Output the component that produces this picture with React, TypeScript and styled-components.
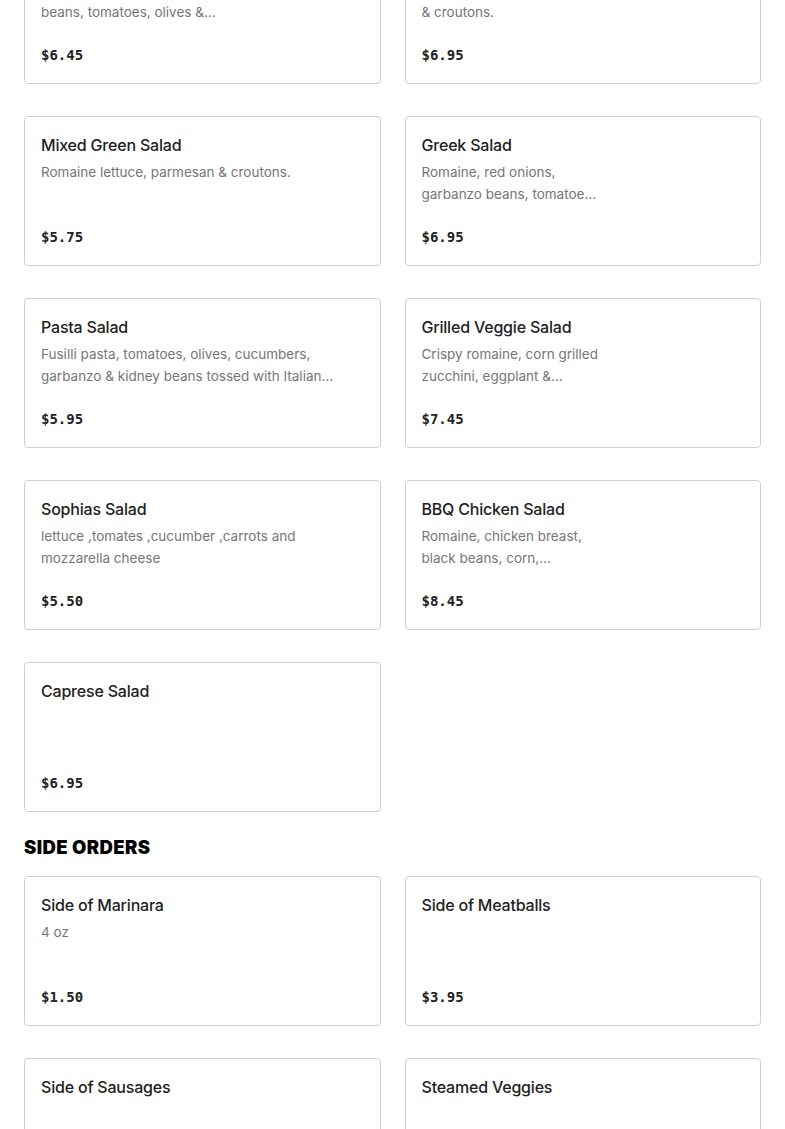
import styled, { createGlobalStyle } from 'styled-components';

const GlobalStyle = createGlobalStyle`
    html, body {
        margin: 0;
        padding: 0;
        background: #ffffff;
    }
    body {
        font-family: Inter, "Noto Sans", sans-serif;
        -webkit-font-smoothing: antialiased;
    }
`;

type Item = {
    name: string;
    description?: string;
    price: string;
};

const salads: Item[] = [
    { name: 'Antipasto Salad', description: 'Romaine, salami, provolone, onions, garbanzo beans, tomatoes, olives &...', price: '$6.45' },
    { name: 'Caesar Salad', description: 'Romaine, shaved parmesan & croutons.', price: '$6.95' },
    { name: 'Mixed Green Salad', description: 'Romaine lettuce, parmesan & croutons.', price: '$5.75' },
    { name: 'Greek Salad', description: 'Romaine, red onions, garbanzo beans, tomatoes, olives & feta cheese.', price: '$6.95' },
    { name: 'Pasta Salad', description: 'Fusilli pasta, tomatoes, olives, cucumbers, garbanzo & kidney beans tossed with Italian dressing.', price: '$5.95' },
    { name: 'Grilled Veggie Salad', description: 'Crispy romaine, corn grilled zucchini, eggplant & peppers.', price: '$7.45' },
    { name: 'Sophias Salad', description: 'lettuce ,tomates ,cucumber ,carrots and mozzarella cheese', price: '$5.50' },
    { name: 'BBQ Chicken Salad', description: 'Romaine, chicken breast, black beans, corn, tomatoes & BBQ ranch.', price: '$8.45' },
    { name: 'Caprese Salad', price: '$6.95' },
];

const sides: Item[] = [
    { name: 'Side of Marinara', description: '4 oz', price: '$1.50' },
    { name: 'Side of Meatballs', price: '$3.95' },
    { name: 'Side of Sausages', price: '$3.95' },
    { name: 'Steamed Veggies', price: '$3.50' },
];

const Page = styled.main`
    margin-top: -66px;
    padding: 0 24px 40px;
`;

const Grid = styled.div`
    display: grid;
    grid-template-columns: 1fr 1fr;
    column-gap: 24px;
    row-gap: 32px;
`;

const SectionTitle = styled.h2`
    margin: 23px 0 17px;
    font-family: Inter, "Liberation Sans", sans-serif;
    font-size: 18.5px;
    line-height: 24px;
    font-weight: 900;
    letter-spacing: 0.4px;
    color: #000000;
`;

const Card = styled.div`
    box-sizing: border-box;
    height: 150px;
    display: flex;
    flex-direction: column;
    padding: 16px 16px 17px;
    border: 1px solid #d0d0d0;
    border-radius: 4px;
    background: #ffffff;
`;

const Name = styled.h3`
    margin: 0;
    font-size: 16px;
    line-height: 24px;
    font-weight: 500;
    letter-spacing: -0.2px;
    color: #222222;
`;

const Description = styled.p<{ $narrow?: boolean }>`
    margin: 4px 0 0;
    max-width: ${({ $narrow }) => ($narrow ? '180px' : 'none')};
    font-size: 13.5px;
    line-height: 22px;
    color: #767676;
    display: -webkit-box;
    -webkit-line-clamp: 2;
    -webkit-box-orient: vertical;
    overflow: hidden;
`;

const Price = styled.div`
    margin-top: auto;
    font-family: "DejaVu Sans Mono", "Liberation Mono", monospace;
    font-size: 14px;
    line-height: 24px;
    font-weight: 700;
    color: #222222;
    transform: translateY(1px);
`;

const MenuCard = ({ item, narrow }: { item: Item; narrow?: boolean }) => (
    <Card>
        <Name>{item.name}</Name>
        {item.description && <Description $narrow={narrow}>{item.description}</Description>}
        <Price>{item.price}</Price>
    </Card>
);

const App = () => {
    return (
        <>
            <GlobalStyle />
            <Page>
                <Grid>
                    {salads.map((item, i) => (
                        <MenuCard key={item.name} item={item} narrow={i % 2 === 1} />
                    ))}
                </Grid>
                <SectionTitle>SIDE ORDERS</SectionTitle>
                <Grid>
                    {sides.map((item, i) => (
                        <MenuCard key={item.name} item={item} narrow={i % 2 === 1} />
                    ))}
                </Grid>
            </Page>
        </>
    );
};

export default App;
